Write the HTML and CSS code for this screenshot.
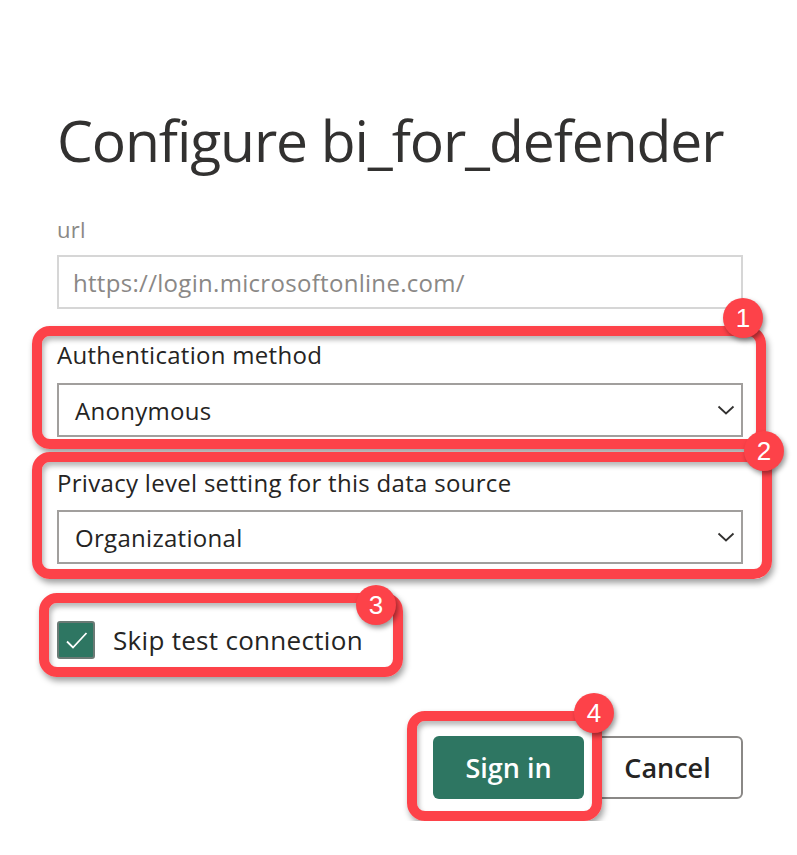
FILE: index.html
```html
<!DOCTYPE html>
<html lang="en">
<head>
<meta charset="utf-8">
<title>Configure bi_for_defender</title>
<link rel="stylesheet" href="styles.css">
</head>
<body>
<main class="dialog">
  <h1 class="title">Configure bi_for_defender</h1>

  <div class="field">
    <div class="label label-muted">url</div>
    <div class="input input-disabled">https://login.microsoftonline.com/</div>
  </div>

  <div class="callout callout-auth">
    <span class="badge badge-1">1</span>
    <div class="label">Authentication method</div>
    <div class="select">
      <span>Anonymous</span>
      <svg class="chevron" width="18" height="10" viewBox="0 0 18 10"><path d="M1.5 1.5 L9 8.5 L16.5 1.5" fill="none" stroke="#323130" stroke-width="1.8"/></svg>
    </div>
  </div>

  <div class="callout callout-privacy">
    <span class="badge badge-2">2</span>
    <div class="label">Privacy level setting for this data source</div>
    <div class="select">
      <span>Organizational</span>
      <svg class="chevron" width="18" height="10" viewBox="0 0 18 10"><path d="M1.5 1.5 L9 8.5 L16.5 1.5" fill="none" stroke="#323130" stroke-width="1.8"/></svg>
    </div>
  </div>

  <div class="callout callout-check">
    <span class="badge badge-3">3</span>
    <span class="checkbox">
      <svg width="34" height="34" viewBox="0 0 34 34"><path d="M8 18.5 L14 24.5 L27.5 10" fill="none" stroke="#ffffff" stroke-width="1.8"/></svg>
    </span>
    <span class="check-label">Skip test connection</span>
  </div>

  <div class="actions">
    <div class="callout callout-sign">
      <span class="badge badge-4">4</span>
      <button class="btn btn-primary">Sign in</button>
    </div>
    <button class="btn btn-secondary">Cancel</button>
  </div>
</main>
</body>
</html>
```

FILE: styles.css
```css
* { box-sizing: border-box; }

html, body {
  margin: 0;
  background: #ffffff;
}

body {
  font-family: "Open Sans", "Noto Sans", "DejaVu Sans", sans-serif;
  color: #252423;
}

.dialog {
  width: 743px;
  padding: 104px 0 0 57px;
}

.title {
  margin: 0;
  font-size: 57px;
  line-height: 72px;
  font-weight: 400;
  color: #323130;
  letter-spacing: -1.1px;
  white-space: nowrap;
}

.field {
  margin-top: 39px;
}

.label {
  font-size: 24px;
  line-height: 32px;
  letter-spacing: 0.3px;
  white-space: nowrap;
}

.label-muted {
  font-size: 22px;
  line-height: 28px;
  letter-spacing: 0.2px;
  color: #8a8886;
}

.input,
.select {
  height: 54px;
  font-size: 24px;
  letter-spacing: 0.3px;
  display: flex;
  align-items: center;
  white-space: nowrap;
}

.input-disabled {
  margin-top: 12px;
  border: 2px solid #d6d6d6;
  padding-left: 14px;
  color: #8a8886;
}

.select {
  margin-top: 12px;
  border: 2px solid #a19f9d;
  padding: 0 6px 0 16px;
  justify-content: space-between;
  color: #252423;
}

.chevron {
  display: block;
}

.callout {
  position: relative;
  border: 10px solid #fd4249;
  border-radius: 18px;
  box-shadow: 2px 4px 6px rgba(0, 0, 0, 0.38), inset 2px 4px 5px rgba(0, 0, 0, 0.28);
  background: transparent;
}

.callout-auth {
  margin: 17px -23px 0 -25px;
  padding: 3px 13px 2px 15px;
}

.callout-privacy {
  margin: 3px -29px 0 -25px;
  padding: 5px 19px 5px 15px;
}

.callout-privacy .select {
  margin-top: 11px;
}

.callout-check {
  margin: 14px 0 0 -18px;
  width: 364px;
  height: 84px;
  padding: 9px 0 0 8px;
  display: flex;
  align-items: center;
  gap: 18px;
}

.checkbox {
  width: 38px;
  height: 38px;
  border: 2px solid #6b7a75;
  border-radius: 3px;
  background: #2e7662;
  display: flex;
  align-items: center;
  justify-content: center;
  flex: none;
}

.checkbox svg {
  display: block;
}

.check-label {
  font-size: 26px;
  line-height: 32px;
  letter-spacing: 0.3px;
  white-space: nowrap;
}

.badge {
  position: absolute;
  width: 40px;
  height: 40px;
  border-radius: 50%;
  background: #fd4249;
  color: #ffffff;
  font-family: "Liberation Sans", Arial, sans-serif;
  font-size: 26px;
  line-height: 40px;
  text-align: center;
  box-shadow: 2px 3px 5px rgba(0, 0, 0, 0.4);
  z-index: 2;
}

.badge-1 { right: -7px; top: -38px; }
.badge-2 { right: -22px; top: -31px; }
.badge-3 { right: -3px; top: -18px; }
.badge-4 { right: -22px; top: -28px; }

.actions {
  margin-top: 34px;
  width: 686px;
  display: flex;
  justify-content: flex-end;
  align-items: flex-start;
}

.callout-sign {
  margin-right: -10px;
  padding: 15px 8px 12px 16px;
  z-index: 1;
  background: transparent;
}

.btn {
  width: 151px;
  height: 63px;
  border-radius: 6px;
  font-family: "Open Sans", "Noto Sans", sans-serif;
  font-size: 27px;
  font-weight: 600;
  letter-spacing: 0;
  cursor: pointer;
  display: block;
  white-space: nowrap;
}

.btn-primary {
  border: none;
  background: #2e7662;
  color: #ffffff;
}

.btn-secondary {
  margin-top: 25px;
  border: 2px solid #8a8886;
  background: #ffffff;
  color: #252423;
}
```
